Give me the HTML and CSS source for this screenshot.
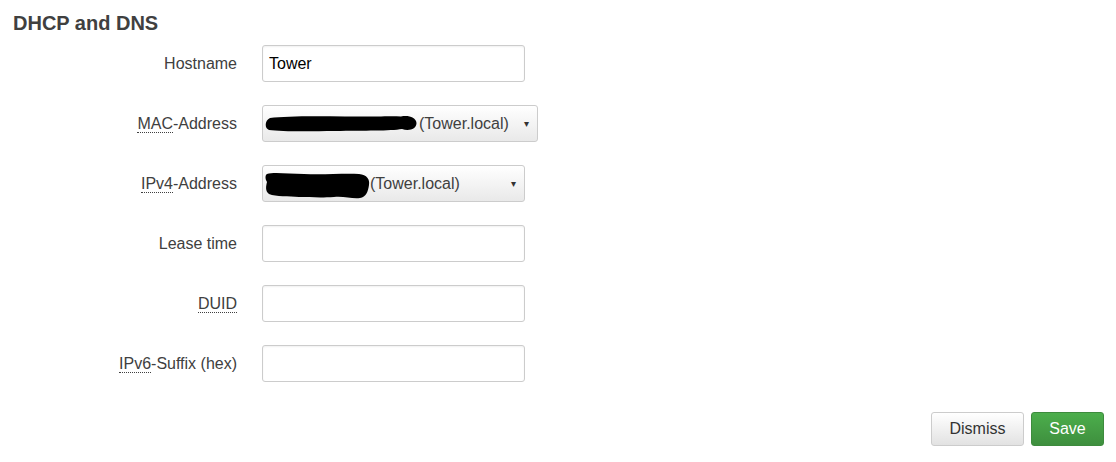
FILE: index.html
```html
<!DOCTYPE html>
<html>
<head>
<meta charset="utf-8">
<link rel="stylesheet" href="styles.css">
</head>
<body>
<div class="panel">
  <h2 class="title">DHCP and DNS</h2>
  <div class="form">
    <div class="label">Hostname</div>
    <div class="field"><div class="input"><span class="value">Tower</span></div></div>

    <div class="label"><abbr class="abbr">MAC</abbr>-Address</div>
    <div class="field">
      <div class="select select-wide">
        <svg class="blob blob-mac" width="152" height="17" viewBox="0 0 152 17">
          <path d="M5 3 C20 1 50 1 80 1.5 C110 2 125 0.5 136 1.5 C143 0 151 2 151.5 8 C151.5 14 144 16.5 137 14 C125 16 100 15.5 70 16 C40 16.5 15 16.5 4 15 C-1 13 0 5 5 3 Z" fill="#000"/>
        </svg>
        <span class="opt">(Tower.local)</span>
        <span class="arrow">&#9662;</span>
      </div>
    </div>

    <div class="label"><abbr class="abbr">IPv4</abbr>-Address</div>
    <div class="field">
      <div class="select">
        <svg class="blob blob-ip" width="106" height="28" viewBox="0 0 106 28">
          <path d="M3 2 C10 0 25 2 40 2 C60 3 80 1 95 2 C103 3 106 7 105 13 C104 20 102 25 96 26 C88 27 80 24 70 25 C55 26 45 25 35 25 C25 24 12 25 5 22 C1 19 2 14 3 10 C1 7 1 3 3 2 Z" fill="#000"/>
        </svg>
        <span class="opt">(Tower.local)</span>
        <span class="arrow">&#9662;</span>
      </div>
    </div>

    <div class="label">Lease time</div>
    <div class="field"><div class="input"></div></div>

    <div class="label"><abbr class="abbr">DUID</abbr></div>
    <div class="field"><div class="input"></div></div>

    <div class="label"><abbr class="abbr">IPv6</abbr>-Suffix (hex)</div>
    <div class="field"><div class="input"></div></div>
  </div>
  <div class="actions">
    <button class="btn btn-default">Dismiss</button>
    <button class="btn btn-save">Save</button>
  </div>
</div>
</body>
</html>
```
FILE: styles.css
```css
html, body {
  margin: 0;
  padding: 0;
  background: #fff;
}
body {
  font-family: "Liberation Sans", Arial, sans-serif;
  color: #404040;
}
.panel {
  padding: 11px 12px 0 13px;
}
.title {
  margin: 0;
  font-size: 20px;
  line-height: 24px;
  font-weight: bold;
  color: #404040;
}
.form {
  margin-top: 10px;
  display: grid;
  grid-template-columns: 224px 1fr;
  column-gap: 25px;
  row-gap: 24px;
}
.label {
  box-sizing: border-box;
  text-align: right;
  font-size: 16px;
  line-height: 36px;
  height: 36px;
  padding-top: 1px;
  color: #404040;
}
.abbr {
  text-decoration: none;
  border-bottom: 1px dotted #404040;
  line-height: 1;
}
.field {
  display: flex;
  align-items: center;
  height: 36px;
}
.input {
  box-sizing: border-box;
  width: 263px;
  height: 37px;
  border: 1px solid #cccccc;
  border-radius: 3px;
  background: #fff;
  box-shadow: inset 0 1px 2px rgba(0,0,0,0.06);
  padding: 1px 6px 0;
  display: flex;
  align-items: center;
}
.value {
  font-size: 16px;
  color: #000;
}
.select {
  box-sizing: border-box;
  width: 263px;
  height: 37px;
  border: 1px solid #cccccc;
  border-radius: 3px;
  background: linear-gradient(#ffffff, #e9e9e9);
  display: flex;
  align-items: center;
  padding: 1px 8px 0 1px;
  font-size: 16px;
  color: #404040;
}
.select-wide {
  width: 276px;
  padding-left: 2px;
}
.blob {
  display: block;
  flex: none;
}
.blob-mac {
  margin-top: 0;
  margin-right: 2px;
}
.blob-ip {
  margin-top: 5px;
}
.opt {
  flex: 1;
  white-space: nowrap;
}
.arrow {
  font-size: 10px;
  color: #333;
  flex: none;
}
.actions {
  display: flex;
  justify-content: flex-end;
  gap: 7px;
  margin-top: 31px;
}
.btn {
  box-sizing: border-box;
  height: 34px;
  padding: 0 17px;
  font-family: "Liberation Sans", Arial, sans-serif;
  font-size: 16px;
  border-radius: 3px;
  cursor: pointer;
}
.btn-default {
  width: 93px;
  color: #333;
  border: 1px solid #cccccc;
  background: linear-gradient(#ffffff, #e2e2e2);
}
.btn-save {
  width: 73px;
  color: #fff;
  border: 1px solid #3d8b3d;
  background: linear-gradient(#4cae4c, #3e8f3e);
}
```
